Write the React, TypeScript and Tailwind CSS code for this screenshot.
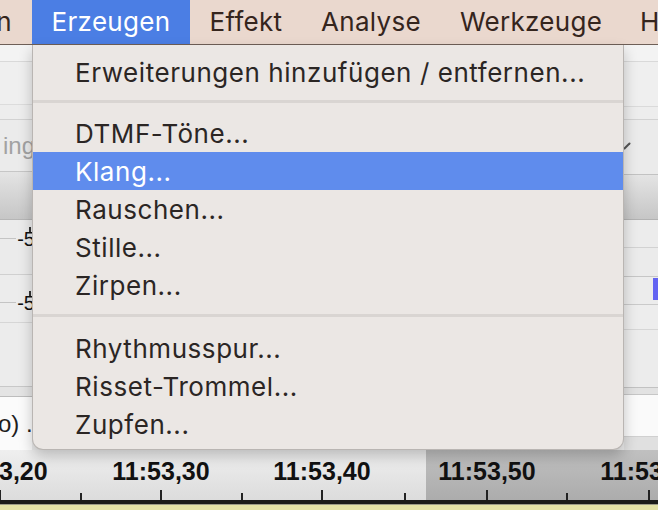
import React from "react";

type Item = { label: string; active?: boolean } | { sep: true; top: number; bottom: number };

const menuItems: Item[] = [
  { label: "Erweiterungen hinzufügen / entfernen..." },
  { sep: true, top: 9, bottom: 11 },
  { label: "DTMF-Töne..." },
  { label: "Klang...", active: true },
  { label: "Rauschen..." },
  { label: "Stille..." },
  { label: "Zirpen..." },
  { sep: true, top: 10, bottom: 12 },
  { label: "Rhythmusspur..." },
  { label: "Risset-Trommel..." },
  { label: "Zupfen..." },
];

const rulerLabels = [
  { x: -1, t: "11:53,20" },
  { x: 161, t: "11:53,30" },
  { x: 322, t: "11:53,40" },
  { x: 487, t: "11:53,50" },
  { x: 649, t: "11:53,60" },
];

const ticks = [
  { x: 0, tall: true },
  { x: 81, tall: false },
  { x: 161, tall: true },
  { x: 242, tall: false },
  { x: 322, tall: true },
  { x: 405, tall: false },
  { x: 487, tall: true },
  { x: 567, tall: false },
  { x: 649, tall: true },
];

export default function App() {
  return (
    <div className="relative w-[658px] h-[510px] overflow-hidden bg-[#ececec] font-['Inter','Noto_Sans',sans-serif]">
      {/* Menu bar */}
      <div className="flex h-[44px] bg-[#ead8ce] text-[26px] tracking-[0.3px] text-[#35251d] leading-[44px]">
        <div className="w-[32px] shrink-0 overflow-hidden flex justify-end pr-[20px]">n</div>
        <div className="w-[158px] shrink-0 text-center bg-[#4b7ee4] text-white">Erzeugen</div>
        <div className="w-[112px] shrink-0 text-center">Effekt</div>
        <div className="w-[138px] shrink-0 text-center">Analyse</div>
        <div className="w-[182px] shrink-0 text-center">Werkzeuge</div>
        <div className="pl-[18px] shrink-0">Hilfe</div>
      </div>
      <div className="h-[1px] bg-[#6e5f57]" />

      {/* Background content */}
      <div className="flex h-[405px]">
        {/* left strip */}
        <div className="w-[32px] shrink-0 flex flex-col overflow-hidden font-['Liberation_Sans',sans-serif]">
          <div className="h-[17px] bg-[#f3f3f3] border-b border-[#d9d9d9]" />
          <div className="h-[43px] bg-[#efefef] border-b border-[#dcdcdc]" />
          <div className="h-[15px] bg-[#ededed] border-b border-[#d2d2d2]" />
          <div className="h-[52px] bg-[#ebebeb] border-b border-[#c6c6c6] flex items-center justify-end">
            <span className="text-[24px] text-[#a2a2a2] leading-none mr-[-3px]">ing</span>
          </div>
          <div className="h-[48px] bg-gradient-to-b from-[#e4e4e4] to-[#c6c6c6] border-b border-[#b6b6b6]" />
          <div className="h-[55px] bg-[#ebebeb] border-b border-[#d0d0d0] relative">
            <div className="absolute left-0 w-[16px] top-[18px] h-[1px] bg-[#c4c4c4]" />
            <div className="absolute left-[29px] top-[7px] w-[2px] h-[5px] bg-[#333]" />
            <span className="absolute right-[-3px] top-[9px] text-[20px] leading-none text-[#111]">-5</span>
          </div>
          <div className="h-[48px] bg-[#ececec] border-b border-[#d6d6d6] relative">
            <div className="absolute left-0 w-[16px] top-[27px] h-[1px] bg-[#c4c4c4]" />
            <div className="absolute left-[29px] top-[16px] w-[2px] h-[5px] bg-[#333]" />
            <span className="absolute right-[-3px] top-[18px] text-[20px] leading-none text-[#111]">-5</span>
          </div>
          <div className="h-[64px] bg-[#ececec] border-b border-[#c8c8c8]" />
          <div className="h-[10px] bg-[#e4e4e4] border-b border-[#bdbdbd]" />
          <div className="h-[53px] bg-[#fbfbfb] flex items-center">
            <span className="text-[24px] leading-none text-[#1e1e1e] ml-[-2px] whitespace-nowrap">o) .</span>
          </div>
        </div>

        <div className="flex-1 bg-[#ececec]" />

        {/* right strip */}
        <div className="w-[34px] shrink-0 flex flex-col overflow-hidden">
          <div className="h-[17px] bg-[#f3f3f3] border-b border-[#d9d9d9]" />
          <div className="h-[45px] bg-[#efefef] border-b border-[#dadada]" />
          <div className="h-[13px] bg-[#ededed] border-b border-[#d2d2d2]" />
          <div className="h-[55px] bg-[#ebebeb] border-b border-[#c2c2c2] relative">
            <svg className="absolute left-0 top-[22px]" width="8" height="8" viewBox="0 0 8 8">
              <path d="M0.5 6.5 L5.5 1.5" stroke="#555" strokeWidth="2" strokeLinecap="round" />
            </svg>
          </div>
          <div className="h-[45px] bg-gradient-to-b from-[#e4e4e4] to-[#c6c6c6] border-b border-[#b2b2b2]" />
          <div className="h-[28px] bg-[#ececec] border-b border-[#d2d2d2]" />
          <div className="h-[29px] bg-[#ebebeb] border-b border-[#c6c6c6]" />
          <div className="h-[28px] bg-[#ececec] border-b border-[#cacaca] flex justify-end pt-[1px]">
            <div className="w-[5px] h-[22px] bg-[#6464f2]" />
          </div>
          <div className="h-[25px] bg-[#ededed] border-b border-[#d6d6d6]" />
          <div className="h-[58px] bg-[#ececec] border-b border-[#c2c2c2]" />
          <div className="h-[7px] bg-[#e2e2e2] border-b border-[#c6c6c6]" />
          <div className="h-[42px] bg-[#fafafa] border-b border-[#d0d0d0]" />
          <div className="h-[13px] bg-[#e0e0e0]" />
        </div>
      </div>

      {/* Ruler */}
      <div className="relative h-[50px] bg-gradient-to-b from-[#efefef] to-[#dcdcdc] font-['Liberation_Sans',sans-serif]">
        <div className="absolute left-[426px] right-0 top-0 bottom-0 bg-gradient-to-b from-[#c0c0c0] to-[#acacac]" />
        {rulerLabels.map((l) => (
          <span
            key={l.t}
            className="absolute top-[9px] -translate-x-1/2 text-[25px] leading-[25px] font-bold text-[#111] whitespace-nowrap"
            style={{ left: l.x }}
          >
            {l.t}
          </span>
        ))}
        {ticks.map((t) => (
          <div
            key={t.x}
            className={`absolute bottom-0 w-[2px] bg-[#222] ${t.tall ? "h-[10px]" : "h-[7px]"}`}
            style={{ left: t.x - 1 }}
          />
        ))}
      </div>
      <div className="h-[4px] bg-[#1a1a1a]" />
      <div className="h-[1px] bg-[#9b9a88]" />
      <div className="h-[5px] bg-[#e2e0a6]" />

      {/* Dropdown menu */}
      <div className="absolute left-[32px] top-[45px] w-[592px] bg-[#ebe7e4] border-x border-b border-[#b9b5b2] rounded-b-[11px] shadow-[0_6px_14px_rgba(0,0,0,0.22)] pt-[8px] pb-[6px] text-[26px] tracking-[0.55px] text-[#2b2624]">
        {menuItems.map((it, i) =>
          "sep" in it ? (
            <div key={i} style={{ paddingTop: it.top, paddingBottom: it.bottom }}>
              <div className="h-[3px] bg-[#d9d5d2]" />
            </div>
          ) : (
            <div
              key={i}
              className={`h-[38px] flex items-center pl-[42px] whitespace-nowrap ${it.active ? "bg-[#5f8ced] text-white" : ""}`}
            >
              {it.label}
            </div>
          )
        )}
      </div>
    </div>
  );
}
